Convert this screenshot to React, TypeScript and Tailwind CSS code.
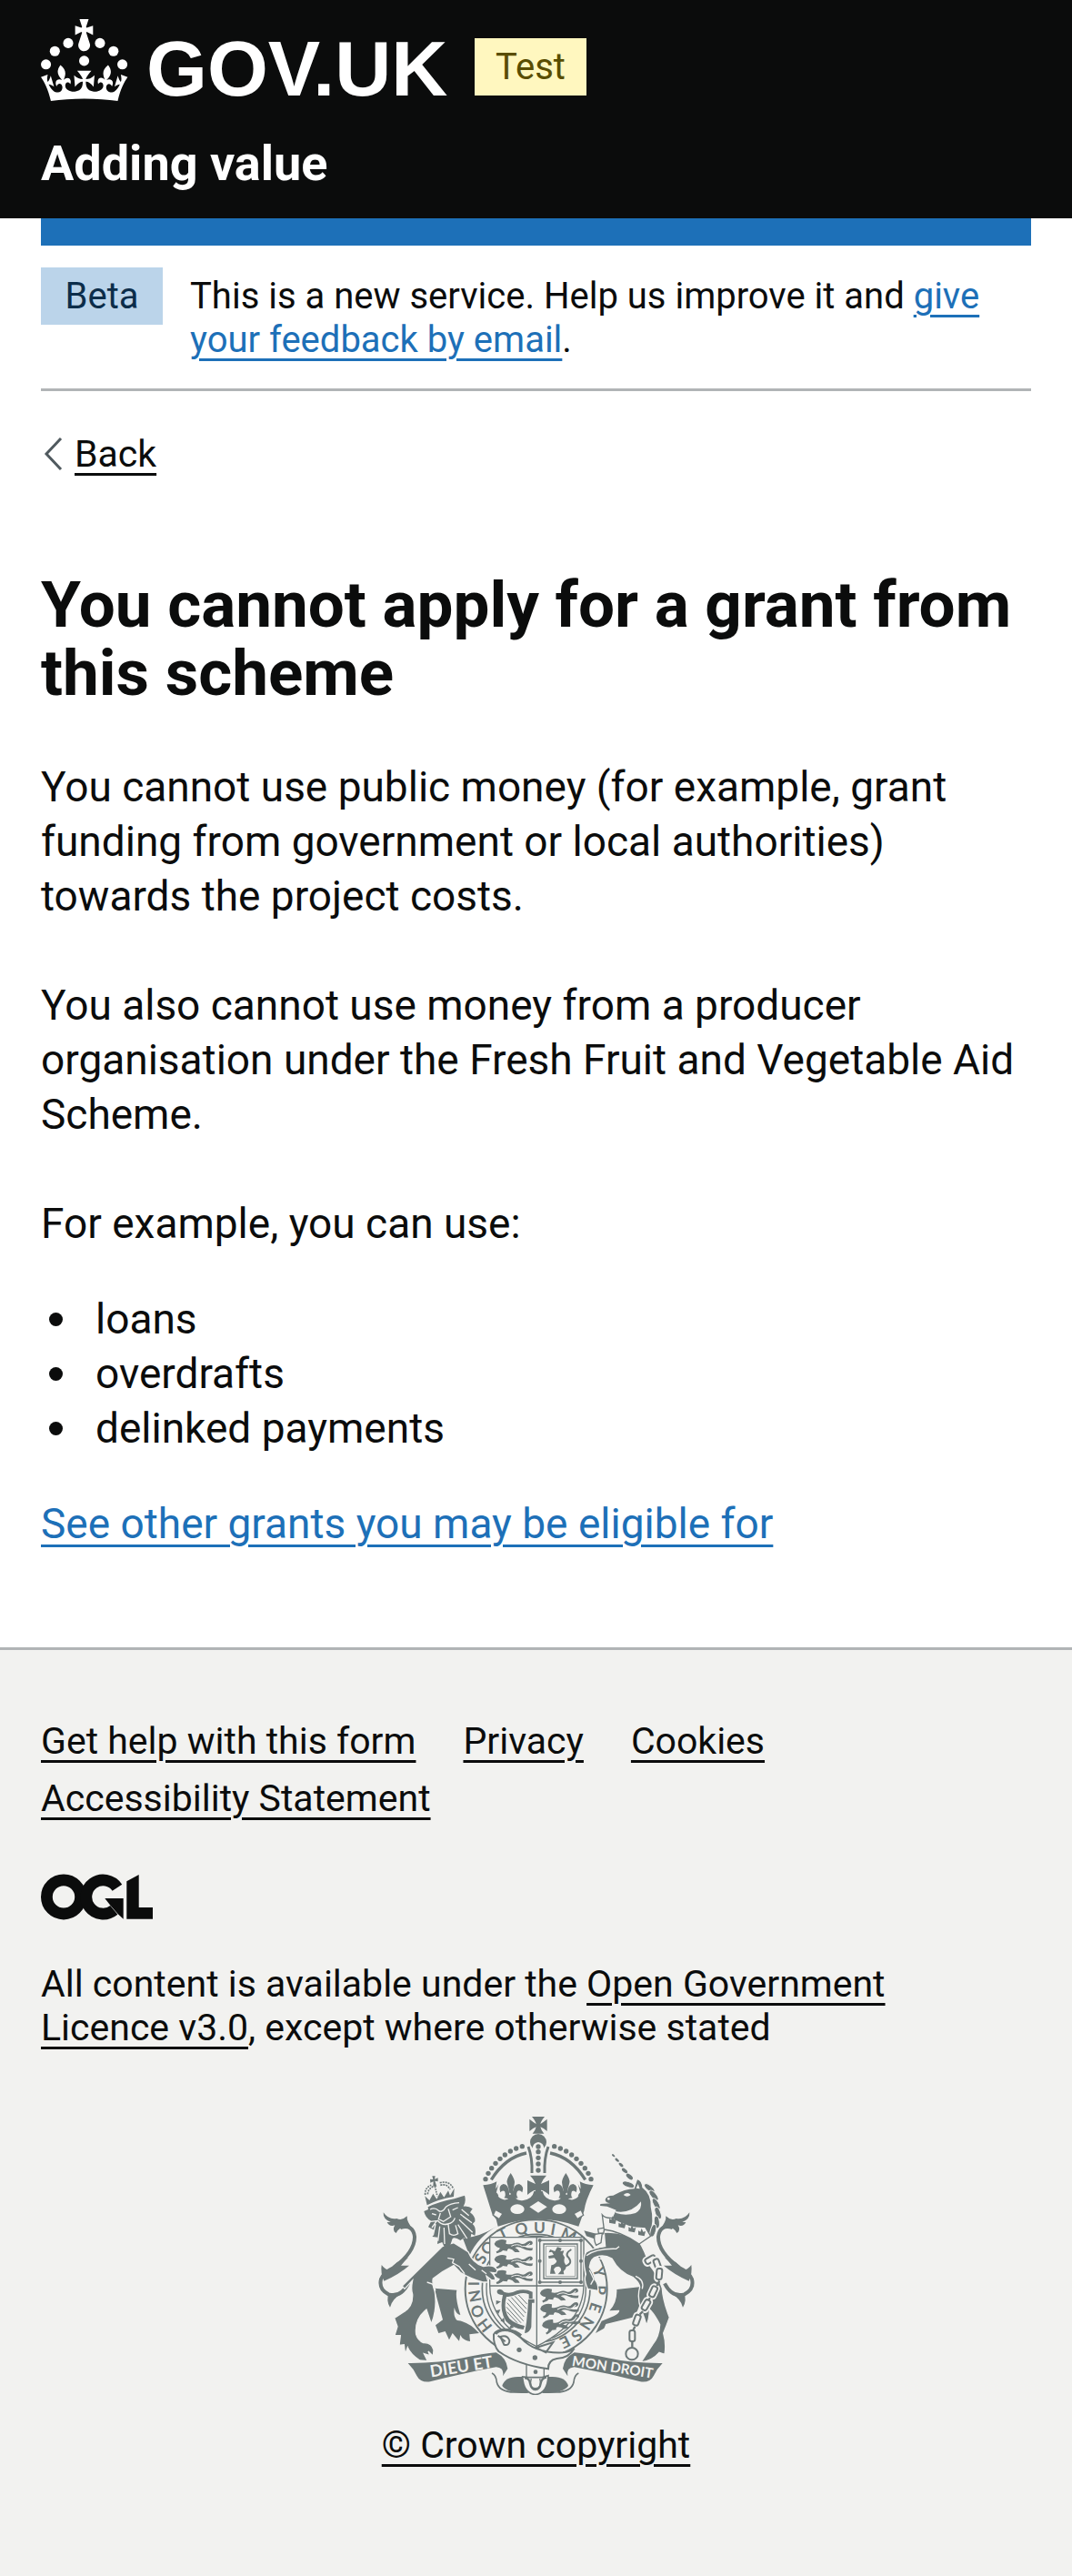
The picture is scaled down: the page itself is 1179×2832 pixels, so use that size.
import type { ReactNode } from "react";

function GovUkLogo() {
  return (
    <svg viewBox="0 0 456 90" className="h-[90px] w-[456px] shrink-0 fill-white" role="img" aria-label="GOV.UK">
      <g transform="scale(1.5)">
        <circle cx="20" cy="17.6" r="3.7" />
        <circle cx="10.2" cy="23.5" r="3.7" />
        <circle cx="3.7" cy="33.2" r="3.7" />
        <circle cx="31.7" cy="30.6" r="3.7" />
        <circle cx="43.3" cy="17.6" r="3.7" />
        <circle cx="53.2" cy="23.5" r="3.7" />
        <circle cx="59.7" cy="33.2" r="3.7" />
        <path d="M33.1,9.8c.2-.1.3-.3.5-.5l4.6,2.4v-6.8l-4.6,1.5c-.1-.2-.3-.3-.5-.5l1.9-5.9h-6.7l1.9,5.9c-.2.1-.3.3-.5.5l-4.6-1.5v6.8l4.6-2.4c.1.2.3.3.5.5l-2.6,8c-.9,2.8,1.2,5.7,4.1,5.7h0c3,0,5.1-2.9,4.1-5.7l-2.6-8ZM37,37.9s-3.4,3.8-4.1,6.1c2.2,0,4.2-.5,6.4-2.8l-.7,8.5c-2-2.8-4.4-4.1-5.7-3.8.1,3.1.5,6.7,5.8,7.2,3.7.3,6.7-1.5,7-3.8.4-2.6-2-4.3-3.7-1.6-1.4-4.5,2.4-6.1,4.9-3.2-1.9-4.5-1.8-7.7,2.4-10.9,3,4,2.6,7.3-1.2,11.1,2.4-1.3,6.2,0,4,4.6-1.2-2.8-3.7-2.2-4.2.2-.3,1.7.7,3.7,3,4.2,1.9.3,4.7-.9,7-5.9-1.3,0-2.4.7-3.9,1.7l2.4-8c.6,2.3,1.4,3.7,2.2,4.5.6-1.6.5-2.8,0-5.3l5,1.8c-2.6,3.6-5.2,8.7-7.3,17.5-7.4-1.1-15.7-1.7-24.5-1.7h0c-8.8,0-17.1.6-24.5,1.7-2.1-8.9-4.7-13.9-7.3-17.5l5-1.8c-.5,2.5-.6,3.7,0,5.3.8-.8,1.6-2.3,2.2-4.5l2.4,8c-1.5-1-2.6-1.7-3.9-1.7,2.3,5,5.2,6.2,7,5.9,2.3-.4,3.3-2.4,3-4.2-.5-2.4-3-3.1-4.2-.2-2.2-4.6,1.6-6,4-4.6-3.7-3.7-4.2-7.1-1.2-11.1,4.2,3.2,4.3,6.4,2.4,10.9,2.5-2.8,6.3-1.3,4.9,3.2-1.8-2.7-4.1-1-3.7,1.6.3,2.3,3.3,4.1,7,3.8,5.4-.5,5.7-4.2,5.8-7.2-1.3-.2-3.7,1-5.7,3.8l-.7-8.5c2.2,2.3,4.2,2.7,6.4,2.8-.7-2.3-4.1-6.1-4.1-6.1h10.6,0Z" />
      </g>
      <text x="116" y="84" className="font-['Liberation_Sans',sans-serif] text-[86px] font-bold">
        GOV.UK
      </text>
    </svg>
  );
}

function OglLogo() {
  return (
    <svg viewBox="0 0 123 51" className="h-[51px] w-[123px] fill-none stroke-[#0b0c0c]" role="img" aria-label="Open Government Licence">
      <circle cx="25" cy="25.4" r="18.6" strokeWidth="12.8" />
      <path d="M83.9 15.2A18.6 18.6 0 1 0 80.3 39.8" strokeWidth="12.8" />
      <path d="M70.3 27H90.7V49.7L84.5 44L76 34.3Z" className="fill-[#0b0c0c] stroke-none" />
      <path d="M94.3 8.3L107.7 1V37H123V49.7H94.3Z" className="fill-[#0b0c0c] stroke-none" />
    </svg>
  );
}

const INK = "#6c7777";
const PAPER = "#f2f2f0";

const pearls: [number, number][] = [
  [526, 152], [506, 159], [487, 168], [469, 180], [453, 193], [438, 208], [425, 224], [414, 241], [405, 260],
];
const lettersOnGarter: [string, number, number, number][] = [
  ["H", 402, 742, 52], ["O", 378, 696, 67], ["N", 370, 646, 80], ["I", 366, 605, 90], ["S", 388, 522, -62],
  ["O", 412, 486, -50], ["T", 462, 440, -25], ["Q", 523, 423, -12], ["U", 583, 420, 0], ["I", 628, 425, 10],
  ["M", 680, 444, 24], ["Y", 781, 566, 75], ["P", 784, 626, 92], ["E", 768, 684, 108], ["N", 740, 736, 122],
  ["S", 706, 776, 140], ["E", 668, 798, 154],
];
const passantLions: [number, number, number][] = [
  [434, 459, 0], [434, 510, 0], [434, 560, 0], [584, 622, -3], [584, 674, -6], [588, 730, -14],
];

function Mirror({ axis, children }: { axis: number; children: ReactNode }) {
  return (
    <>
      {children}
      <g transform={`translate(${axis * 2} 0) scale(-1 1)`}>{children}</g>
    </>
  );
}

function RoyalArms() {
  return (
    <svg viewBox="51 54 1044 918" className="h-[306px] w-[348px]" fill={INK} aria-hidden="true">
      {/* garter */}
      <ellipse cx="572" cy="622" rx="234" ry="228" fill={PAPER} stroke={INK} strokeWidth="6" />
      <ellipse cx="572" cy="620" rx="178" ry="178" fill="none" stroke={INK} strokeWidth="5" />
      <ellipse cx="572" cy="620" rx="164" ry="172" fill="none" stroke={INK} strokeWidth="4" />
      {lettersOnGarter.map(([ch, x, y, a]) => (
        <text key={`${ch}${x}`} transform={`translate(${x} ${y}) rotate(${a})`} textAnchor="middle" y="19" fontSize="52" fontFamily="Lato, sans-serif" fontWeight="700">
          {ch}
        </text>
      ))}

      {/* shield */}
      <path d="M419 452H729V612Q727 735 573 812Q419 735 419 612Z" fill={PAPER} stroke={INK} strokeWidth="4" />
      <path d="M574 452V812M419 612H729" fill="none" stroke={INK} strokeWidth="4" />
      {passantLions.map(([x, y, a]) => (
        <g key={`${x}${y}`} transform={`translate(${x} ${y}) rotate(${a})`}>
          <path d="M0 14Q4 4 14 2Q26 -2 40 3L38 14Q54 18 66 12Q78 8 88 14Q98 18 106 10Q116 2 124 6Q130 14 122 18Q104 20 100 24Q112 30 127 28L125 36Q106 38 94 30Q80 22 68 27Q80 32 84 42H68Q60 32 48 30Q42 32 42 38L28 36Q24 42 8 46L6 40Q18 36 18 28Q2 24 0 14Z" />
          <path d="M56 22Q76 12 92 23Q104 27 118 13" fill="none" stroke={PAPER} strokeWidth="3" />
        </g>
      ))}
      <g fill="none" stroke={INK} strokeWidth="4">
        <path d="M584 462H720V600H584ZM597 474H708V588H597Z" />
        <path d="M604 481H701V581H604Z" strokeWidth="2" />
      </g>
      {[584, 651, 720].map((x) => [462, 530, 600].map((y) => (x === 651 && y === 530 ? null : <circle key={`${x}${y}`} cx={x} cy={y} r="6" />)))}
      <path d="M642 484L656 488L652 498L664 496L660 508L666 518Q662 532 668 540Q676 552 662 564L664 574H644L654 562Q656 552 646 548Q634 548 630 558L636 572H618L622 544Q638 540 640 530L632 520L614 522L612 514L630 510L624 500L614 502L618 492L634 498Z" />
      <path d="M666 548Q694 540 680 520Q664 506 688 492" fill="none" stroke={INK} strokeWidth="6" />
      <path d="M462 642Q438 642 444 626Q456 618 466 632Q486 640 508 628Q534 620 560 632V654H548V640Q530 632 510 640Q488 650 474 648Q462 690 484 720Q504 738 534 744L530 756Q494 752 472 728Q450 694 462 642Z" />
      <path d="M546 656H566V668H558L556 748Q550 768 534 768Q544 720 546 656Z" />
      <path d="M456 664L440 660V674ZM454 690L438 694L448 704ZM466 716L454 728L468 732ZM490 738L482 754L498 750Z" />
      <path d="M480 656L532 714M490 650L538 702M502 646L540 688M514 642L542 672M476 668L530 728M474 682L522 734M476 698L510 734" stroke={INK} strokeWidth="3" fill="none" />

      {/* crown */}
      <path d="M397 280Q425 278 442 268Q430 320 465 328Q490 330 488 300H500Q498 335 530 330Q560 325 565 300H593Q598 325 628 330Q660 335 658 300H670Q668 330 693 328Q728 320 716 268Q733 278 761 280Q735 330 730 365L712 416Q579 368 446 416L440 392L428 378Z" />
      <path d="M558 54H600Q588 68 586 78Q596 72 608 62V102Q596 92 586 88Q588 98 598 110H560Q570 98 572 88Q562 92 550 102V62Q562 72 572 78Q570 68 558 54Z" />
      <circle cx="579" cy="138" r="27" />
      <path d="M560 240V158Q562 140 579 138Q596 140 598 158V240Z" fill={PAPER} />
      {[153, 170, 190, 210, 231].map((y) => (
        <circle key={y} cx="579" cy={y} r="8" />
      ))}
      <path d="M552 248H606Q592 262 588 276Q602 270 615 264V312Q600 298 588 296Q590 312 604 326H554Q568 312 570 296Q558 298 543 312V264Q556 270 570 276Q566 262 552 248Z" />
      <path d="M579 333L608 352L579 371L550 352Z" fill={PAPER} />
      <Mirror axis={579}>
        <path d="M546 153Q560 190 558 240" fill="none" stroke={INK} strokeWidth="9" />
        <path d="M540 174Q470 188 424 262" fill="none" stroke={INK} strokeWidth="10" />
        {pearls.map(([x, y]) => (
          <circle key={x} cx={x} cy={y} r="8" />
        ))}
        <path d="M488 240Q473 262 476 272Q480 284 484 306H494Q500 284 501 270Q500 258 488 240Z" />
        <path d="M484 312Q482 276 464 276Q446 282 454 304Q460 296 468 300Q474 316 466 322L490 326L512 322Q504 312 510 300Q518 294 526 304Q534 284 516 276Q496 276 494 312Z" />
        <path d="M436 322L448 276Q440 296 426 300Q444 300 448 316Z" />
        <ellipse cx="510" cy="359" rx="23" ry="16" fill={PAPER} />
        <path d="M438 361L462 374L450 392L430 379Z" fill={PAPER} stroke={INK} strokeWidth="4" />
      </Mirror>

      {/* tails */}
      <Mirror axis={573}>
        <path d="M150 604Q125 652 85 640Q52 625 60 590Q68 568 102 552Q172 500 171 450Q166 408 124 420" fill="none" stroke={INK} strokeWidth="12" />
        <path d="M68 370Q85 395 112 390Q130 398 146 382Q144 402 168 428L150 420Q120 415 110 438Q95 430 106 412Q88 418 80 402L92 402Q66 392 68 370Z" />
        <path d="M62 543Q74 560 90 560Q104 530 150 518Q136 532 126 545L153 545Q120 574 70 596Q58 570 62 543Z" />
        <path d="M86 636L126 640Q98 654 90 683Q76 662 86 636Z" />
      </Mirror>

      {/* lion */}
      <path d="M330 455Q385 452 445 414Q380 450 352 512Z" />
      <path d="M236 620L310 626Q304 650 322 708Q308 706 302 684Q298 716 312 726Q350 730 384 768L352 772L354 795Q330 792 322 774L318 794L296 768L285 790L272 762L250 768L240 742L264 724Q252 680 236 620Z" />
      <g stroke={PAPER} strokeWidth="4">
        <path d="M262 482L300 470L348 500Q362 536 398 548Q432 540 444 560L440 570L424 568Q440 582 436 594L424 592L408 580L414 600L396 600Q352 588 322 568L300 545Q262 564 232 588Q228 604 238 632Q246 690 226 738Q216 708 210 690Q170 722 176 772Q182 792 200 800Q228 798 234 824L232 844L216 828L222 842L202 836L214 860L188 858Q158 838 148 815L140 838L136 806L120 808L124 776L105 776L114 746L104 718L135 698Q166 680 164 640Q158 622 164 594L138 622L130 612Z" />
      </g>
      <path d="M280 520L300 524L296 536L318 548L336 572M212 600L230 606L240 628M350 540L372 560M392 560L408 572" fill="none" stroke={PAPER} strokeWidth="4" />
      <path d="M202 366L216 360L215 352Q250 335 302 325L336 314Q342 334 332 350Q350 348 362 358L354 370Q372 382 370 400L362 408Q376 420 370 446L358 440Q356 460 346 464L336 452L322 462Q304 450 296 456L286 486L268 482L262 468L246 474L248 452L230 450L236 428L216 418L226 398Q206 388 202 366Z" />
      <g fill="none" stroke={PAPER} strokeWidth="4">
        <path d="M222 360Q238 352 250 364Q262 372 274 352Q288 340 318 338M256 372L250 392L266 400L290 384L282 358M246 396Q262 414 280 408Q300 404 304 388M282 410L286 440Q300 450 314 440L306 412M228 374L242 378M296 362L314 354M224 400L244 398L228 420M240 408L232 446M254 416L248 464M268 420L270 474M326 360L350 380M322 376L360 404M318 394L362 436M314 410L344 456" />
      </g>
      <path d="M212 346L205 316L220 330L232 308L244 326L256 302L268 320L282 298L288 314L302 290L300 318Q250 326 212 346Z" />
      <path d="M229 250H239L237 260L248 256V268L238 266L244 284H232L233 268L223 272L222 260L232 261Z" />
      <path d="M206 312Q204 288 226 280M254 272Q286 264 298 290M214 310Q216 292 232 284M256 280Q278 274 288 294" fill="none" stroke={INK} strokeWidth="5" strokeDasharray="6 3" />
      <path d="M238 284L246 316" stroke={INK} strokeWidth="5" strokeDasharray="5 3" />

      {/* unicorn */}
      <path d="M730 430L776 442L768 458L738 448Z" />
      <path d="M838 624L912 616L916 660Q910 700 890 716L802 738L796 752L768 768L788 728L828 712Q850 700 846 692L814 694Q840 668 838 624Z" />
      <path d="M796 436Q860 432 912 466Q932 498 944 540Q976 580 988 620Q990 660 1012 716Q1002 744 992 768Q1002 804 996 838L978 832Q956 858 918 864L956 806Q978 780 980 740Q962 704 946 690Q946 720 936 742Q928 712 918 690Q904 650 914 616Q912 600 892 584Q846 568 822 522Q796 508 772 516Q752 520 748 550Q764 576 766 592Q778 606 776 628L742 622Q728 590 736 574Q722 520 738 500Q760 488 800 482Z" stroke={PAPER} strokeWidth="4" />
      <path d="M738 512Q770 488 836 490L846 482M748 560L762 590L752 608M900 580Q930 592 922 622M770 520L790 524" fill="none" stroke={PAPER} strokeWidth="4" />
      <path d="M766 442L790 438L786 470L770 478Q760 460 766 442ZM776 424L798 420L794 440L778 438Z" fill={PAPER} stroke={INK} strokeWidth="4" />
      <path d="M800 328Q802 314 826 314Q866 292 896 292L906 262Q920 266 922 288Q952 310 950 352Q962 400 946 440Q880 420 822 392L836 362L806 350L783 348L784 342L816 340Q800 338 800 328Z" />
      <path d="M832 366Q884 376 918 334Q922 360 900 372Q868 382 836 372ZM860 312Q874 300 884 312Q872 322 860 312ZM908 276L914 292L902 290Z" fill={PAPER} />
      <circle cx="811" cy="325" r="4" fill={PAPER} />
      {[
        [946, 290, 40], [960, 314, 50], [968, 342, 60], [974, 372, 70], [970, 402, 85], [958, 430, 105], [876, 278, 20],
      ].map(([x, y, a]) => (
        <ellipse key={`${x}${y}`} cx={x} cy={y} rx="21" ry="9" transform={`rotate(${a} ${x} ${y})`} stroke={PAPER} strokeWidth="3" />
      ))}
      {[
        [827, 182, 6], [839, 197, 8], [852, 213, 9], [864, 232, 11], [880, 252, 13],
      ].map(([x, y, r]) => (
        <ellipse key={x} cx={x} cy={y} rx={r} ry={r / 2} transform={`rotate(40 ${x} ${y})`} />
      ))}
      <path d="M790 378Q800 390 826 388Q880 420 932 418L950 448L912 474Q850 432 796 426Z" fill={PAPER} stroke={INK} strokeWidth="4" />
      {[
        [824, 398], [855, 412], [888, 426], [920, 438],
      ].map(([x, y]) => (
        <path key={x} d={`M${x} ${y - 16}L${x + 5} ${y - 4}L${x + 13} ${y - 6}L${x + 9} ${y + 10}L${x - 11} ${y + 6}L${x - 11} ${y - 8}L${x - 4} ${y - 4}Z`} />
      ))}
      {[
        [948, 526, 60], [972, 542, -20], [978, 574, 5], [958, 632, 25], [934, 676, 30], [904, 726, 20], [889, 778, 0],
      ].map(([x, y, a]) => (
        <g key={y} transform={`translate(${x} ${y}) rotate(${a})`}>
          <rect x="-11" y="-22" width="22" height="42" rx="8" fill={PAPER} stroke={PAPER} strokeWidth="12" />
          <rect x="-9" y="-19" width="18" height="36" rx="7" fill={PAPER} stroke={INK} strokeWidth="6" />
        </g>
      ))}
      <path d="M979 595L970 612M948 652L942 660M924 696L914 706M898 746L892 758M889 796V814" stroke={INK} strokeWidth="7" />
      <circle cx="888" cy="836" r="20" fill="none" stroke={INK} strokeWidth="6" />

      {/* scroll */}
      <Mirror axis={569}>
        <path d="M460 942Q468 912 512 912H530L546 966Q480 968 460 942Z" />
        <path d="M426 900Q440 906 442 930Q450 962 500 963H540" fill="none" stroke={INK} strokeWidth="5" />
        <path d="M149 867Q250 868 330 850Q400 835 440 832Q474 850 478 885L462 910Q468 882 440 880Q330 900 222 928Q190 932 178 908Q168 886 149 867Z" />
      </Mirror>
      <text transform="translate(328 897) rotate(-9)" textAnchor="middle" fontSize="55" fontFamily="Lato, sans-serif" fontWeight="700" fill={PAPER}>
        DIEU ET
      </text>
      <text transform="translate(822 896) rotate(9)" textAnchor="middle" fontSize="46" fontFamily="Lato, sans-serif" fontWeight="700" fill={PAPER}>
        MON DROIT
      </text>

      {/* belt and buckle */}
      <path d="M540 866H598V920H540Z" fill={PAPER} stroke={INK} strokeWidth="4" />
      <path d="M604 832L628 798L572 816ZM432 772Q440 756 478 758Q500 764 522 784Q570 836 660 832Q684 830 698 818Q680 850 640 852Q610 858 612 886Q510 872 448 828Q430 806 432 772Z" fill={PAPER} stroke={INK} strokeWidth="6" />
      <path d="M438 770Q450 754 480 758Q506 762 522 776" fill="none" stroke={INK} strokeWidth="10" />
      <path d="M454 780Q476 772 484 792Q484 810 466 806Z" fill={PAPER} stroke={INK} strokeWidth="6" />
      <path d="M446 776L470 796" stroke={INK} strokeWidth="6" />
      <circle cx="516" cy="823" r="8" />
      <circle cx="568" cy="849" r="8" />
      <circle cx="570" cy="896" r="7" />
      <path d="M527 912Q530 966 569 971Q610 966 612 908L592 914H546Z" fill={PAPER} stroke={INK} strokeWidth="5" />
      <path d="M534 916Q550 916 552 934Q556 954 569 954Q584 954 587 934Q590 916 606 914" fill="none" stroke={INK} strokeWidth="7" />
      <path d="M556 918Q548 950 569 950Q592 950 584 918" fill="none" stroke={INK} strokeWidth="4" />
    </svg>
  );
}

const underline = "underline decoration-[3px] underline-offset-[7px]";
const bullet = "flex items-center gap-[36px] pl-[9px] before:size-[15px] before:rounded-full before:bg-[#0b0c0c] before:content-['']";

function TextLink({ children, tone = "ink" }: { children: ReactNode; tone?: "ink" | "blue" }) {
  return (
    <a href="#" className={`${underline} ${tone === "blue" ? "text-[#1d70b8]" : "text-[#0b0c0c]"}`}>
      {children}
    </a>
  );
}

export default function App() {
  return (
    <div className="bg-white font-['Roboto',sans-serif] text-[#0b0c0c]">
      <header className="bg-[#0b0c0c] px-[45px] pt-[21px] pb-[23px] text-white">
        <div className="flex items-start gap-[21px]">
          <a href="#" aria-label="GOV.UK">
            <GovUkLogo />
          </a>
          <strong className="mt-[21px] min-w-[123px] bg-[#fff7bf] px-[20px] text-center text-[40px] leading-[63px] font-normal text-[#594d00]">Test</strong>
        </div>
        <a href="#" className="mt-[31px] block text-[54px] leading-[75px] font-bold">
          Adding value
        </a>
      </header>

      <div className="px-[45px]">
        <div className="h-[30px] bg-[#1d70b8]" />
        <div className="flex items-start gap-[30px] border-b-[3px] border-[#b1b4b6] pt-[24px] pb-[29px]">
          <strong className="min-w-[134px] bg-[#bbd4ea] px-[20px] text-center text-[40px] leading-[63px] font-normal text-[#0c2d4a]">Beta</strong>
          <p className="pt-[8px] text-[40px] leading-[48px]">
            This is a new service. Help us improve it and <TextLink tone="blue">give your feedback by email</TextLink>.
          </p>
        </div>

        <a href="#" className="mt-[45px] flex w-fit items-center gap-[12px] pl-[3px] text-[41px] leading-[48px]">
          <svg viewBox="0 0 22 36" className="h-[36px] w-[22px] fill-none stroke-[#505a5f]" strokeWidth="3" aria-hidden="true">
            <path d="M19 1L3 18L19 35" />
          </svg>
          <span className={underline}>Back</span>
        </a>

        <main className="pt-[104px] pb-[106px] text-[46px] leading-[60px]">
          <h1 className="text-[71px] leading-[75px] font-bold">You cannot apply for a grant from this scheme</h1>
          <div className="mt-[58px] flex flex-col gap-[60px]">
            <p>You cannot use public money (for example, grant funding from government or local authorities) towards the project costs.</p>
            <p>You also cannot use money from a producer organisation under the Fresh Fruit and Vegetable Aid Scheme.</p>
            <p>For example, you can use:</p>
          </div>
          <ul className="my-[45px]">
            <li className={bullet}>loans</li>
            <li className={bullet}>overdrafts</li>
            <li className={bullet}>delinked payments</li>
          </ul>
          <p>
            <TextLink tone="blue">See other grants you may be eligible for</TextLink>
          </p>
        </main>
      </div>

      <footer className="border-t-[3px] border-[#b1b4b6] bg-[#f2f2f0] px-[45px] pt-[76px] pb-[120px] text-[41px] leading-[48px]">
        <ul className="flex flex-wrap gap-x-[52px] gap-y-[15px]">
          <li><TextLink>Get help with this form</TextLink></li>
          <li><TextLink>Privacy</TextLink></li>
          <li><TextLink>Cookies</TextLink></li>
          <li className="basis-full"><TextLink>Accessibility Statement</TextLink></li>
        </ul>
        <div className="mt-[59px]">
          <OglLogo />
        </div>
        <p className="mt-[46px] max-w-[960px]">
          All content is available under the <TextLink>Open Government Licence v3.0</TextLink>, except where otherwise stated
        </p>
        <div className="mt-[74px] flex flex-col items-center gap-[31px]">
          <RoyalArms />
          <TextLink>© Crown copyright</TextLink>
        </div>
      </footer>
    </div>
  );
}
